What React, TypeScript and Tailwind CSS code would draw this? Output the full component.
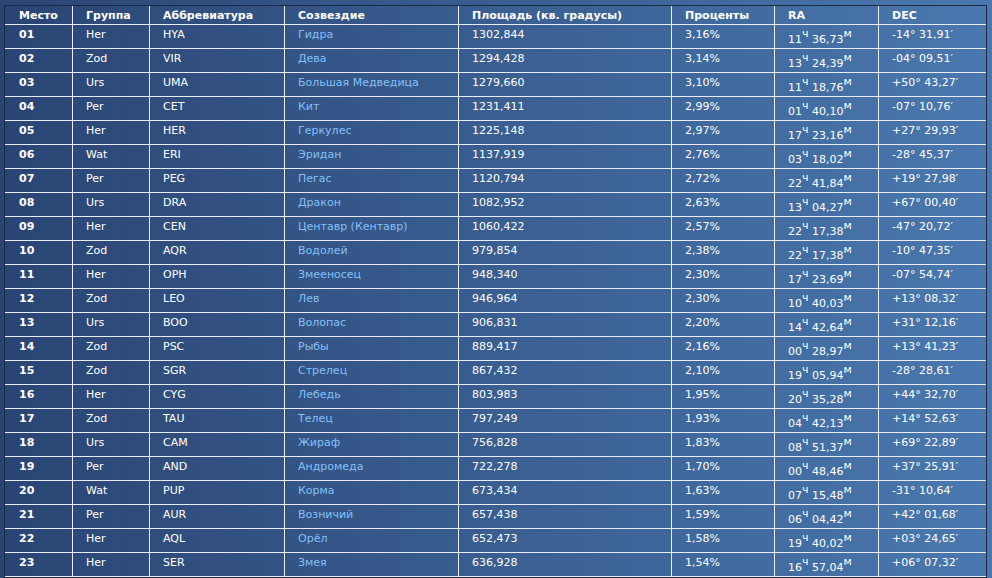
const rows: string[][] = [
  ["01", "Her", "HYA", "Гидра", "1302,844", "3,16%", "11", "36,73", "-14° 31,91′"],
  ["02", "Zod", "VIR", "Дева", "1294,428", "3,14%", "13", "24,39", "-04° 09,51′"],
  ["03", "Urs", "UMA", "Большая Медведица", "1279,660", "3,10%", "11", "18,76", "+50° 43,27′"],
  ["04", "Per", "CET", "Кит", "1231,411", "2,99%", "01", "40,10", "-07° 10,76′"],
  ["05", "Her", "HER", "Геркулес", "1225,148", "2,97%", "17", "23,16", "+27° 29,93′"],
  ["06", "Wat", "ERI", "Эридан", "1137,919", "2,76%", "03", "18,02", "-28° 45,37′"],
  ["07", "Per", "PEG", "Пегас", "1120,794", "2,72%", "22", "41,84", "+19° 27,98′"],
  ["08", "Urs", "DRA", "Дракон", "1082,952", "2,63%", "13", "04,27", "+67° 00,40′"],
  ["09", "Her", "CEN", "Центавр (Кентавр)", "1060,422", "2,57%", "22", "17,38", "-47° 20,72′"],
  ["10", "Zod", "AQR", "Водолей", "979,854", "2,38%", "22", "17,38", "-10° 47,35′"],
  ["11", "Her", "OPH", "Змееносец", "948,340", "2,30%", "17", "23,69", "-07° 54,74′"],
  ["12", "Zod", "LEO", "Лев", "946,964", "2,30%", "10", "40,03", "+13° 08,32′"],
  ["13", "Urs", "BOO", "Волопас", "906,831", "2,20%", "14", "42,64", "+31° 12,16′"],
  ["14", "Zod", "PSC", "Рыбы", "889,417", "2,16%", "00", "28,97", "+13° 41,23′"],
  ["15", "Zod", "SGR", "Стрелец", "867,432", "2,10%", "19", "05,94", "-28° 28,61′"],
  ["16", "Her", "CYG", "Лебедь", "803,983", "1,95%", "20", "35,28", "+44° 32,70′"],
  ["17", "Zod", "TAU", "Телец", "797,249", "1,93%", "04", "42,13", "+14° 52,63′"],
  ["18", "Urs", "CAM", "Жираф", "756,828", "1,83%", "08", "51,37", "+69° 22,89′"],
  ["19", "Per", "AND", "Андромеда", "722,278", "1,70%", "00", "48,46", "+37° 25,91′"],
  ["20", "Wat", "PUP", "Корма", "673,434", "1,63%", "07", "15,48", "-31° 10,64′"],
  ["21", "Per", "AUR", "Возничий", "657,438", "1,59%", "06", "04,42", "+42° 01,68′"],
  ["22", "Her", "AQL", "Орёл", "652,473", "1,58%", "19", "40,02", "+03° 24,65′"],
  ["23", "Her", "SER", "Змея", "636,928", "1,54%", "16", "57,04", "+06° 07,32′"],
];

const headers = ["Место", "Группа", "Аббревиатура", "Созвездие", "Площадь (кв. градусы)", "Проценты", "RA", "DEC"];

// column widths measured off the white rules
const cols = "grid grid-cols-[67px_77px_135px_174px_213px_103px_104px_108px]";
const cell = "pl-[13px] border-l border-[#e9edf2] first:border-l-0 first:pl-[14px]";

const App = () => {
  return (
    <div
      className="h-[578px] w-full overflow-hidden bg-gradient-to-r from-[#2a4574] to-[#4a78ae] pt-[5px] pl-[4px] text-[11px] leading-[13px] text-white"
      style={{ fontFamily: '"DejaVu Sans", Verdana, sans-serif' }}
    >
      <div className="w-[983px] border border-[#1c2b44]">
        <div className={`${cols} h-[19px] border-b border-[#e9edf2] font-bold`}>
          {headers.map((h) => (
            <div key={h} className={`${cell} pt-[3px]`}>
              {h}
            </div>
          ))}
        </div>
        {rows.map((r) => (
          <div key={r[0]} className={`${cols} h-[24px] border-b border-[#e9edf2]`}>
            <div className={`${cell} pt-[3px] font-bold`}>{r[0]}</div>
            <div className={`${cell} pt-[3px]`}>{r[1]}</div>
            <div className={`${cell} pt-[3px]`}>{r[2]}</div>
            <div className={`${cell} pt-[3px] text-[#86c0f7]`}>{r[3]}</div>
            <div className={`${cell} pt-[3px]`}>{r[4]}</div>
            <div className={`${cell} pt-[3px]`}>{r[5]}</div>
            <div className={`${cell} pt-[8px] whitespace-nowrap`}>
              {r[6]}
              <sup className="text-[11px] -top-[6px]">ч</sup> {r[7]}
              <sup className="text-[11px] -top-[6px]">м</sup>
            </div>
            <div className={`${cell} pt-[3px]`}>{r[8]}</div>
          </div>
        ))}
      </div>
    </div>
  );
};

export default App;
